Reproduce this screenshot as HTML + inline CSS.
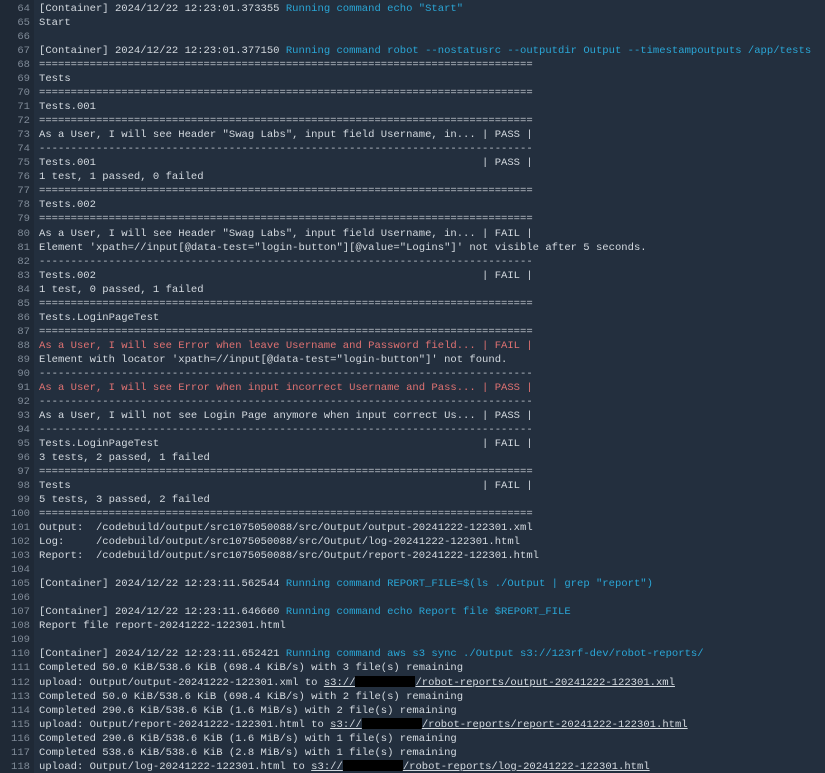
<!DOCTYPE html>
<html><head><meta charset="utf-8"><style>
html,body{margin:0;padding:0;width:825px;height:773px;overflow:hidden;background:#232f3e;}
.wrap{position:relative;width:825px;height:773px;}
.gut{position:absolute;left:0;top:0;width:34px;height:773px;background:#1f2936;}
.lines{position:absolute;left:0;top:2px;font-family:"Liberation Mono",monospace;font-size:10.55px;line-height:14.04px;color:#d4dae0;}
.l{height:14.04px;white-space:pre;}
.n{display:inline-block;width:30px;text-align:right;color:#7f8a97;margin-right:9px;}
.b{color:#2aa6d6;}
.r{color:#e07272;}
.s{color:#bfc6cd;}
.u{text-decoration:underline;}
.x{display:inline-block;width:60px;height:11px;background:#000;vertical-align:-2px;}
</style></head><body><div class="wrap"><div class="gut"></div><div class="lines"><div class="l"><span class="n">64</span>[Container] 2024/12/22 12:23:01.373355 <span class="b">Running command echo "Start"</span></div><div class="l"><span class="n">65</span>Start</div><div class="l"><span class="n">66</span></div><div class="l"><span class="n">67</span>[Container] 2024/12/22 12:23:01.377150 <span class="b">Running command robot --nostatusrc --outputdir Output --timestampoutputs /app/tests</span></div><div class="l"><span class="n">68</span><span class="s">==============================================================================</span></div><div class="l"><span class="n">69</span>Tests</div><div class="l"><span class="n">70</span><span class="s">==============================================================================</span></div><div class="l"><span class="n">71</span>Tests.001</div><div class="l"><span class="n">72</span><span class="s">==============================================================================</span></div><div class="l"><span class="n">73</span>As a User, I will see Header "Swag Labs", input field Username, in... | PASS |</div><div class="l"><span class="n">74</span><span class="s">------------------------------------------------------------------------------</span></div><div class="l"><span class="n">75</span>Tests.001                                                             | PASS |</div><div class="l"><span class="n">76</span>1 test, 1 passed, 0 failed</div><div class="l"><span class="n">77</span><span class="s">==============================================================================</span></div><div class="l"><span class="n">78</span>Tests.002</div><div class="l"><span class="n">79</span><span class="s">==============================================================================</span></div><div class="l"><span class="n">80</span>As a User, I will see Header "Swag Labs", input field Username, in... | FAIL |</div><div class="l"><span class="n">81</span>Element 'xpath=//input[@data-test="login-button"][@value="Logins"]' not visible after 5 seconds.</div><div class="l"><span class="n">82</span><span class="s">------------------------------------------------------------------------------</span></div><div class="l"><span class="n">83</span>Tests.002                                                             | FAIL |</div><div class="l"><span class="n">84</span>1 test, 0 passed, 1 failed</div><div class="l"><span class="n">85</span><span class="s">==============================================================================</span></div><div class="l"><span class="n">86</span>Tests.LoginPageTest</div><div class="l"><span class="n">87</span><span class="s">==============================================================================</span></div><div class="l"><span class="n">88</span><span class="r">As a User, I will see Error when leave Username and Password field... | FAIL |</span></div><div class="l"><span class="n">89</span>Element with locator 'xpath=//input[@data-test="login-button"]' not found.</div><div class="l"><span class="n">90</span><span class="s">------------------------------------------------------------------------------</span></div><div class="l"><span class="n">91</span><span class="r">As a User, I will see Error when input incorrect Username and Pass... | PASS |</span></div><div class="l"><span class="n">92</span><span class="s">------------------------------------------------------------------------------</span></div><div class="l"><span class="n">93</span>As a User, I will not see Login Page anymore when input correct Us... | PASS |</div><div class="l"><span class="n">94</span><span class="s">------------------------------------------------------------------------------</span></div><div class="l"><span class="n">95</span>Tests.LoginPageTest                                                   | FAIL |</div><div class="l"><span class="n">96</span>3 tests, 2 passed, 1 failed</div><div class="l"><span class="n">97</span><span class="s">==============================================================================</span></div><div class="l"><span class="n">98</span>Tests                                                                 | FAIL |</div><div class="l"><span class="n">99</span>5 tests, 3 passed, 2 failed</div><div class="l"><span class="n">100</span><span class="s">==============================================================================</span></div><div class="l"><span class="n">101</span>Output:  /codebuild/output/src1075050088/src/Output/output-20241222-122301.xml</div><div class="l"><span class="n">102</span>Log:     /codebuild/output/src1075050088/src/Output/log-20241222-122301.html</div><div class="l"><span class="n">103</span>Report:  /codebuild/output/src1075050088/src/Output/report-20241222-122301.html</div><div class="l"><span class="n">104</span></div><div class="l"><span class="n">105</span>[Container] 2024/12/22 12:23:11.562544 <span class="b">Running command REPORT_FILE=$(ls ./Output | grep "report")</span></div><div class="l"><span class="n">106</span></div><div class="l"><span class="n">107</span>[Container] 2024/12/22 12:23:11.646660 <span class="b">Running command echo Report file $REPORT_FILE</span></div><div class="l"><span class="n">108</span>Report file report-20241222-122301.html</div><div class="l"><span class="n">109</span></div><div class="l"><span class="n">110</span>[Container] 2024/12/22 12:23:11.652421 <span class="b">Running command aws s3 sync ./Output s3://123rf-dev/robot-reports/</span></div><div class="l"><span class="n">111</span>Completed 50.0 KiB/538.6 KiB (698.4 KiB/s) with 3 file(s) remaining</div><div class="l"><span class="n">112</span>upload: Output/output-20241222-122301.xml to <span class="u">s3://<span class="x"></span>/robot-reports/output-20241222-122301.xml</span></div><div class="l"><span class="n">113</span>Completed 50.0 KiB/538.6 KiB (698.4 KiB/s) with 2 file(s) remaining</div><div class="l"><span class="n">114</span>Completed 290.6 KiB/538.6 KiB (1.6 MiB/s) with 2 file(s) remaining</div><div class="l"><span class="n">115</span>upload: Output/report-20241222-122301.html to <span class="u">s3://<span class="x"></span>/robot-reports/report-20241222-122301.html</span></div><div class="l"><span class="n">116</span>Completed 290.6 KiB/538.6 KiB (1.6 MiB/s) with 1 file(s) remaining</div><div class="l"><span class="n">117</span>Completed 538.6 KiB/538.6 KiB (2.8 MiB/s) with 1 file(s) remaining</div><div class="l"><span class="n">118</span>upload: Output/log-20241222-122301.html to <span class="u">s3://<span class="x"></span>/robot-reports/log-20241222-122301.html</span></div></div></div></body></html>
